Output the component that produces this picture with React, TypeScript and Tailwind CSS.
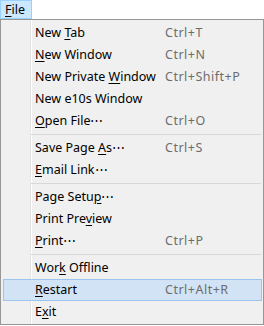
import type { ReactNode } from "react";

type Item = { label: ReactNode; shortcut?: string; active?: boolean } | "sep";

const u = (c: string) => <span className="underline underline-offset-[1.5px]">{c}</span>;

const items: Item[] = [
  { label: <>New {u("T")}ab</>, shortcut: "Ctrl+T" },
  { label: <>{u("N")}ew Window</>, shortcut: "Ctrl+N" },
  { label: <>New Private {u("W")}indow</>, shortcut: "Ctrl+Shift+P" },
  { label: <>New e10s Window</> },
  { label: <>{u("O")}pen File⋯</>, shortcut: "Ctrl+O" },
  "sep",
  { label: <>Save Page {u("A")}s⋯</>, shortcut: "Ctrl+S" },
  { label: <>{u("E")}mail Link⋯</> },
  "sep",
  { label: <>Page Setu{u("p")}⋯</> },
  { label: <>Print Pre{u("v")}iew</> },
  { label: <>{u("P")}rint⋯</>, shortcut: "Ctrl+P" },
  "sep",
  { label: <>Wor{u("k")} Offline</> },
  { label: <>{u("R")}estart</>, shortcut: "Ctrl+Alt+R", active: true },
  { label: <>E{u("x")}it</> },
];

export default function App() {
  return (
    <div
      className="w-[264px] h-[326px] bg-white text-[12.5px] text-black overflow-hidden"
      style={{ fontFamily: '"Noto Sans", "Liberation Sans", sans-serif' }}
    >
      {/* Menu bar */}
      <div className="h-[19px] flex">
        <div className="w-[32px] h-[19px] bg-[#cce8ff] border border-[#99d1ff] flex items-center pl-[4px] pt-[1px] leading-none">
          {u("F")}ile
        </div>
      </div>

      {/* Dropdown */}
      <div className="h-[306px] border border-[#979797] bg-[#f0f0f0] pt-[2px] bg-[linear-gradient(to_right,transparent_29px,#e2e3e3_29px,#e2e3e3_30px,#ffffff_30px,#ffffff_31px,transparent_31px)]">
        {items.map((it, i) =>
          it === "sep" ? (
            <div key={i} className="h-[5px] pt-[2px]">
              <div className="ml-[30px] mr-[2px] h-px bg-[#d7d7d7]" />
            </div>
          ) : (
            <div
              key={i}
              className={`h-[22px] ml-[2px] mr-[1px] flex items-center border pt-[1px] leading-none ${
                it.active ? "bg-[#d1e3f4] border-[#99c5ee]" : "border-transparent"
              }`}
            >
              <span className="pl-[31px] w-[161px] shrink-0 whitespace-nowrap">{it.label}</span>
              {it.shortcut && (
                <span className="text-[#6d6d6d] tracking-[0.5px] whitespace-nowrap">{it.shortcut}</span>
              )}
            </div>
          )
        )}
      </div>
    </div>
  );
}
